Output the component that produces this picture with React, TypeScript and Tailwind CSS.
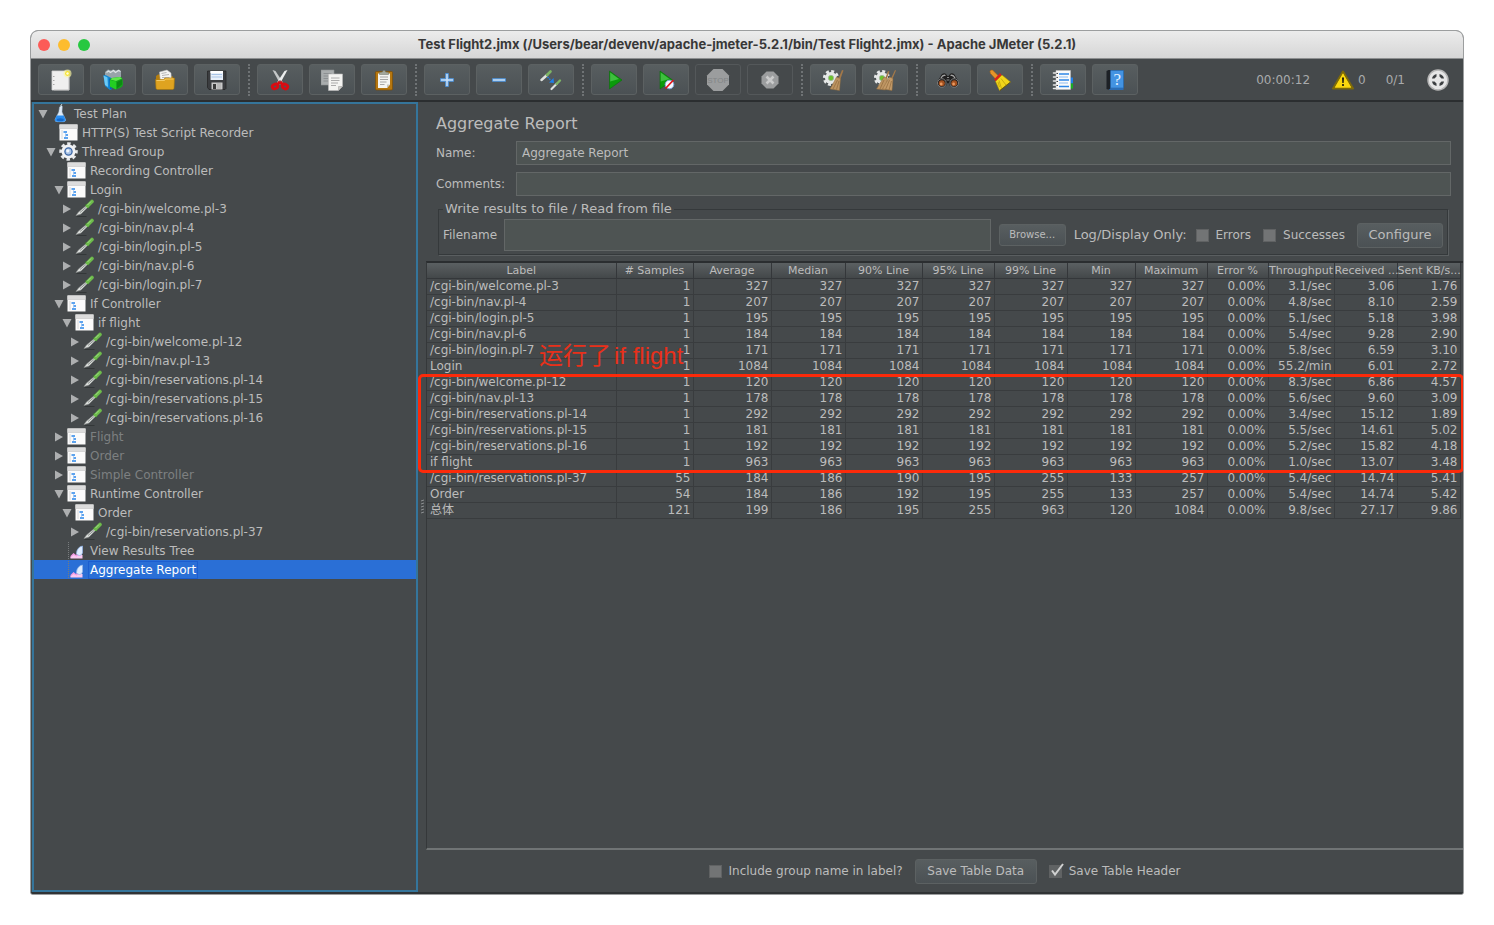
import { useState, type ReactNode } from "react";

/* ---------- toolbar icons ---------- */

function NewIcon() {
  return (
    <svg viewBox="0 0 22 22" className="size-[22px]">
      <path d="M2 2h17v19H2z" fill="#efefef" stroke="#d6d6d6" strokeWidth=".8" />
      <path d="M3 7.500h1.500M3 11.500h1.500M3 15.500h1.500" stroke="#a9a9a9" />
      <path d="M4 21h15V7" fill="none" stroke="#b9b9b9" strokeWidth=".7" />
      <circle cx="17.500" cy="4.500" r="4" fill="#fbf6a0" opacity=".65" />
      <circle cx="17.500" cy="4.500" r="2.400" fill="#f4e02b" />
      <circle cx="17.500" cy="4.500" r="1.200" fill="#fffde0" />
    </svg>
  );
}

function TemplatesIcon() {
  return (
    <svg viewBox="0 0 22 22" className="size-[22px]">
      <path d="M3 3l3-2.500 3 1 2-1 3 1 3-1 2 2v6l-8 3-8-3z" fill="#98a3a9" />
      <path d="M4.500 3.500l2-1.500 2 1.500 3-2 2 2 3-2 2 1" stroke="#dde2e4" strokeWidth="1.200" fill="none" />
      <path d="M1.500 6.500l2-.5 6 3v11.500l-1.500.5-5-4z" fill="#1389d6" />
      <path d="M1.500 6.500l4 2 .5 9.500-3-2z" fill="#6ccaf7" />
      <path d="M7 9.500h5v9l-4 2z" fill="#0b66b0" />
      <path d="M8 11q0-2 2-2l8-1q2 0 2.500 2l.5 5q0 2-2 3.500L14 20.500l-6-3z" fill="#14a81a" />
      <path d="M8.500 10.500l5.500 1.500 6-2.500-2-1.500-8 1z" fill="#5fe84a" />
      <path d="M8 11l6 1.500v8l-6-3z" fill="#23cf22" />
      <path d="M15 13l5-2.500v5l-5 4z" fill="#0c8a12" />
    </svg>
  );
}

function OpenIcon() {
  return (
    <svg viewBox="0 0 22 22" className="size-[22px]">
      <path d="M2 7l2-1.500h4l1 2h10V13H2z" fill="#b47e10" />
      <path d="M5.500 3l7.500-2 4 3 .5 9h-11z" fill="#f4f4f4" stroke="#bdbdbd" strokeWidth=".5" />
      <path d="M7.500 4.500l5-1M8 6.500l7-1M8 8.500h7.500" stroke="#999" strokeWidth=".7" />
      <path d="M1.500 10.500h8l1.500-1.500h9.500l-.5 10.500-1 1H3l-1-1z" fill="#dfa320" stroke="#a97708" strokeWidth=".6" />
      <path d="M2.500 11.500h8l1-1.500h8" stroke="#f6d478" strokeWidth=".8" fill="none" />
    </svg>
  );
}

function SaveIcon() {
  return (
    <svg viewBox="0 0 22 22" className="size-[22px]">
      <path d="M1.500 2h18.500v17.500l-1 1H3l-1.500-2z" fill="#3b3d40" stroke="#222" strokeWidth=".7" />
      <path d="M4.500 2h12.500v9H4.500z" fill="#e8f0fa" />
      <path d="M4.500 2h12.500v2H4.500z" fill="#fff" />
      <path d="M5.500 5.500h10.500M5.500 8h10.500" stroke="#a7c3e6" strokeWidth="1.200" />
      <path d="M5.500 13.500h11v7h-11z" fill="#c9c9c9" />
      <path d="M7 15h3v5H7z" fill="#3a3a3a" />
      <path d="M12 14v6.500M14 14v6.500" stroke="#9a9a9a" strokeWidth=".7" />
    </svg>
  );
}

function CutIcon() {
  return (
    <svg viewBox="0 0 22 22" className="size-[22px]">
      <path d="M3.500 1l3 1 7.500 11.500-2.500 2z" fill="#c4c7c8" />
      <path d="M18.500 1l-3 1L8 13.500l2.500 2z" fill="#eceeee" />
      <path d="M11 12.500l2.500 3M11 12.500l-2.500 3" stroke="#d80c12" strokeWidth="2.800" />
      <ellipse cx="6" cy="17.500" rx="2.800" ry="2.200" fill="none" stroke="#d80c12" strokeWidth="2.900" transform="rotate(-25 6 17.500)" />
      <ellipse cx="16" cy="17.500" rx="2.800" ry="2.200" fill="none" stroke="#d80c12" strokeWidth="2.900" transform="rotate(25 16 17.500)" />
      <circle cx="11" cy="12" r=".8" fill="#555" />
    </svg>
  );
}

function CopyIcon() {
  return (
    <svg viewBox="0 0 22 22" className="size-[22px]">
      <path d="M0 1h13v15H0z" fill="#a9adae" stroke="#8d9192" strokeWidth=".6" />
      <path d="M2.500 4.500h8M2.500 7h5M2.500 9.500h5M2.500 12h5" stroke="#85898a" strokeWidth=".8" />
      <path d="M7.500 5h14v12.500l-4 4H7.500z" fill="#f3f3f1" stroke="#bbb" strokeWidth=".6" />
      <path d="M10 9h8.500M10 11.500h8.500M10 14h7M10 16.500h5" stroke="#a3a3a3" strokeWidth=".9" />
      <path d="M17.500 21.500v-4h4z" fill="#c9c9c5" stroke="#999" strokeWidth=".5" />
    </svg>
  );
}

function PasteIcon() {
  return (
    <svg viewBox="0 0 22 22" className="size-[22px]">
      <rect x="2.500" y="2.500" width="17" height="18.500" rx="1" fill="#b5760f" stroke="#7d4f06" strokeWidth=".7" />
      <path d="M5 4.500h12v11l-3 3.500H5z" fill="#f4f4f2" />
      <path d="M7 8h8M7 10.500h8M7 13h6.500M7 15.500h4.500" stroke="#9d9d9d" strokeWidth=".9" />
      <path d="M14 19v-3.500h3z" fill="#c5c5c1" />
      <path d="M6.500 5.500V3.500l3-.5.5-1.500h2l.5 1.500 3 .5v2z" fill="#a3a79d" stroke="#6f7369" strokeWidth=".5" />
    </svg>
  );
}

function PlusIcon() {
  return (
    <svg viewBox="0 0 22 22" className="size-[22px]">
      <path d="M9.700 4.500h2.600v5.200h5.200v2.600h-5.200v5.200H9.700v-5.200H4.500V9.700h5.200z" fill="#c3dcf5" stroke="#4a8fd6" strokeWidth="1" />
    </svg>
  );
}

function MinusIcon() {
  return (
    <svg viewBox="0 0 22 22" className="size-[22px]">
      <path d="M4.500 9.700h13v2.600h-13z" fill="#c3dcf5" stroke="#4a8fd6" strokeWidth="1" />
    </svg>
  );
}

function ToggleIcon() {
  return (
    <svg viewBox="0 0 22 22" className="size-[22px]">
      <path d="M1.500 11L7 6" stroke="#dfe2df" strokeWidth="2.400" strokeLinecap="round" />
      <path d="M7 6l3.500-3.500" stroke="#7db565" strokeWidth="2.600" strokeLinecap="round" />
      <path d="M11.500 20l5-5" stroke="#dfe2df" strokeWidth="2.200" strokeLinecap="round" />
      <path d="M16.500 15l3.500-3.500" stroke="#7db565" strokeWidth="2.400" strokeLinecap="round" />
      <path d="M7.500 8l3.500 3.500" stroke="#1f7fe8" strokeWidth="1.500" strokeDasharray="1.500 1" />
      <path d="M9 13.500l5 .5-.5-5z" fill="#1f7fe8" />
    </svg>
  );
}

function StartIcon() {
  return (
    <svg viewBox="0 0 22 22" className="size-[22px]">
      <path d="M6.500 2L19 11 6.500 20z" fill="#0a9a0a" stroke="#0a6e0a" strokeWidth=".6" />
      <path d="M7.200 3.500L16 10l-8.800 2.500z" fill="#3fbf3f" />
    </svg>
  );
}

function StartNoPauseIcon() {
  return (
    <svg viewBox="0 0 22 22" className="size-[22px]">
      <path d="M5 2L17.500 11 5 20z" fill="#0a9a0a" stroke="#0a6e0a" strokeWidth=".6" />
      <path d="M5.700 3.500L14.500 10l-8.800 2.500z" fill="#3fbf3f" />
      <circle cx="14.500" cy="15.500" r="4.300" fill="#f5f8ff" stroke="#7fa6dc" strokeWidth="1" />
      <path d="M10.500 19.500l8-8.500" stroke="#e3131a" strokeWidth="1.700" />
    </svg>
  );
}

function StopIcon() {
  return (
    <svg viewBox="0 0 24 24" className="size-6">
      <path d="M7.500 1h9L23 7.500v9L16.500 23h-9L1 16.500v-9z" fill="#9b9d9e" />
      <text x="12" y="15" textAnchor="middle" className="font-['Liberation_Sans'] text-[8px]" fill="#828586">
        STOP
      </text>
    </svg>
  );
}

function ShutdownIcon() {
  return (
    <svg viewBox="0 0 22 22" className="size-[22px]">
      <path d="M7.500 2.500h7l5 5v7l-5 5h-7l-5-5v-7z" fill="#9b9d9e" />
      <path d="M7.500 7.500l7 7M14.500 7.500l-7 7" stroke="#c9caca" strokeWidth="2.600" />
    </svg>
  );
}

function Gear({ x, y }: { x: number; y: number }) {
  return (
    <g transform={`translate(${x} ${y})`}>
      <circle r="6" fill="#e6e8e8" />
      <circle r="6.600" fill="none" stroke="#e6e8e8" strokeWidth="3" strokeDasharray="2.900 2.280" />
      <circle r="2.700" fill="#6cc32f" />
      <circle r="2.700" fill="none" stroke="#a8adad" strokeWidth=".6" />
    </g>
  );
}

function ClearIcon() {
  return (
    <svg viewBox="0 0 22 22" className="size-[22px]">
      <Gear x={9} y={9} />
      <path d="M20 1l1.500.5-3.500 9.500-2-.5z" fill="#a37849" />
      <path d="M14.500 8l4 1.500-1 12L8 20q3-5 6.500-12z" fill="#bd9462" stroke="#8f6a3c" strokeWidth=".5" />
      <path d="M15.500 11l-4.500 9M17 12l-2.500 8.500" stroke="#8f6a3c" strokeWidth=".7" />
    </svg>
  );
}

function ClearAllIcon() {
  return (
    <svg viewBox="0 0 22 22" className="size-[22px]">
      <Gear x={8} y={9} />
      <path d="M14 2l1.500.5-3 8-1.500-.5zM21 1l1 .5-4 9.500-1.500-.5z" fill="#a37849" />
      <path d="M10 8l3.500 1.500-2 11.500L2.500 20z" fill="#bd9462" stroke="#8f6a3c" strokeWidth=".5" />
      <path d="M15.500 8l3.500 1.500-1 12-9.500-1.500z" fill="#c49b69" stroke="#8f6a3c" strokeWidth=".5" />
      <path d="M10 11l-4 9M15.500 11l-4 9.500M17.500 12l-2.500 9" stroke="#8f6a3c" strokeWidth=".7" />
    </svg>
  );
}

function SearchIcon() {
  return (
    <svg viewBox="0 0 24 22" className="h-[22px] w-6">
      <path d="M5.500 5.500Q8 3.500 10 5l1.500 2h1L14 5q2-1.500 4.500.5l4 7-2 5-6.500-.5-1.500-3h-1l-1.500 3-6.500.5-2-5z" fill="#202020" />
      <path d="M5 9q2-3.500 4.500-2.500M19 9q-2-3.500-4.500-2.500" stroke="#a5a5a5" strokeWidth="1.300" fill="none" />
      <path d="M11 8.500h2M10.500 11h3" stroke="#8a8a8a" strokeWidth="1" />
      <circle cx="5.800" cy="14" r="4.300" fill="#1c1c1c" stroke="#7d7d7d" strokeWidth="1" />
      <circle cx="18.200" cy="14" r="4.300" fill="#1c1c1c" stroke="#7d7d7d" strokeWidth="1" />
      <circle cx="5.800" cy="14.200" r="3" fill="#a4511f" />
      <circle cx="18.200" cy="14.200" r="3" fill="#a4511f" />
      <circle cx="5.200" cy="15" r="1.400" fill="#e99a62" />
      <circle cx="17.600" cy="15" r="1.400" fill="#e99a62" />
    </svg>
  );
}

function ResetSearchIcon() {
  return (
    <svg viewBox="0 0 22 22" className="size-[22px]">
      <path d="M1 2.500Q1 .5 3.500 1l6 6-3 3-5-5.500z" fill="#e5952a" stroke="#a8620b" strokeWidth=".5" />
      <path d="M5 10.500l6-6.500 2 2.500L7 12.500z" fill="#d8241c" />
      <path d="M6.500 12.500L13 6l8.500 7-11 8.500z" fill="#f1d51a" stroke="#a98f05" strokeWidth=".5" />
      <path d="M10 11.500l2.500 8M12 9.500l5 6.500M9 13l1.500 5" stroke="#b89b08" strokeWidth=".7" />
      <path d="M11 21.500L21.500 13" stroke="#5f5006" strokeWidth=".8" />
    </svg>
  );
}

function FunctionHelperIcon() {
  return (
    <svg viewBox="0 0 22 22" className="size-[22px]">
      <path d="M17 8.500h4v6h-4z" fill="#1f7fe8" />
      <path d="M17 14.500h4v5h-4z" fill="#19ad22" />
      <path d="M4 1.500h14.500v19H4z" fill="#fafafa" stroke="#c4c4c4" strokeWidth=".5" />
      <path d="M7 5h10M7 11h10M7 17.500h10" stroke="#2f86e6" strokeWidth="1.500" />
      <path d="M7 8h9M7 14h9" stroke="#8fbcf0" strokeWidth="1" />
      <path d="M1.500 4h4M1.500 8h4M1.500 12h4M1.500 16h4M1.500 19.500h4" stroke="#e7e7e7" strokeWidth="1.600" strokeLinecap="round" />
      <path d="M4.500 4.500h1.500M4.500 8.500h1.500M4.500 12.500h1.500M4.500 16.500h1.500" stroke="#444" strokeWidth="1" />
    </svg>
  );
}

function HelpIcon() {
  return (
    <svg viewBox="0 0 22 22" className="size-[22px]">
      <path d="M2.500 2l2-1H7v19.500H4l-1.500-.5z" fill="#1d2126" />
      <path d="M6.500 1.500h13v17.500h-13z" fill="#4393e2" stroke="#1f66b3" strokeWidth=".6" />
      <path d="M5 21l1.500-2h13v2z" fill="#2b6db5" />
      <text x="13.200" y="16" textAnchor="middle" className="font-['Liberation_Serif'] text-[17px]" fill="#e4f1ff">
        ?
      </text>
    </svg>
  );
}

function WarningIcon() {
  return (
    <svg viewBox="0 0 22 20" className="h-5 w-[22px]">
      <path d="M11 1.500L21 18.500H1z" fill="#f7cf05" stroke="#7d6a0a" strokeWidth="2" strokeLinejoin="round" />
      <path d="M11 3.500L19 17.500H3z" fill="#fbd80e" />
      <path d="M10 7.500h2l-.4 5.500h-1.200z" fill="#111" />
      <circle cx="11" cy="15" r="1.100" fill="#111" />
    </svg>
  );
}

function ExpandIcon() {
  return (
    <svg viewBox="0 0 22 22" className="size-[22px]">
      <circle cx="11" cy="11" r="10" fill="#e6e6e6" stroke="#b5b5b5" strokeWidth="1.500" />
      <path d="M5 9.500Q5.500 6 9.500 5v2.500L7.500 9.500zM17 9.500Q16.500 6 12.500 5v2.500l2 2zM5 12.500q.5 3.500 4.500 4.500v-2.500l-2-2zM17 12.500q-.5 3.500-4.500 4.500v-2.500l2-2z" fill="#3c3f41" />
    </svg>
  );
}

/* ---------- tree icons ---------- */

function FlaskIcon() {
  return (
    <svg viewBox="0 0 19 19" className="size-[19px]">
      <path d="M8.500 3l2-1.500.8 1-.3 5.500 3.500 7.500q.5 2-2 2.200H6Q3.500 17.500 4 15.500L7.800 8z" fill="#dfeaf6" stroke="#9fb9d0" strokeWidth=".5" />
      <path d="M5.600 11.500h7.200l1.700 4q.5 2-2 2.200H6q-2.500-.2-2-2.200z" fill="#2a8df0" />
      <ellipse cx="9.300" cy="15.800" rx="3.500" ry="1.500" fill="#1469cb" />
      <path d="M9.500 2L11 0" stroke="#bcc" />
    </svg>
  );
}

function ControllerIcon() {
  return (
    <svg viewBox="0 0 19 19" className="size-[19px]">
      <path d="M.5 1.500h18v16H.5z" fill="#fbfbfb" />
      <path d="M.5 1.500h18v4H.5z" fill="#dcdcdc" />
      <path d="M.5 5.500h18" stroke="#c6c6c6" strokeWidth=".6" />
      <path d="M3 7v9" stroke="#d8d8d8" strokeWidth="1" />
      <path d="M4.500 9h3.500M6 12h3M5 15h4" stroke="#2a86ea" strokeWidth="1.600" />
      <path d="M6.500 10v4" stroke="#a9cdf6" strokeWidth=".8" />
    </svg>
  );
}

function GearIcon() {
  return (
    <svg viewBox="0 0 19 19" className="size-[19px]">
      <circle cx="9.500" cy="9.500" r="7.500" fill="none" stroke="#e6e8ea" strokeWidth="3.500" strokeDasharray="3.300 2.590" strokeDashoffset="1.500" />
      <circle cx="9.500" cy="9.500" r="5.300" fill="none" stroke="#f1f2f4" strokeWidth="3.400" />
      <circle cx="9.500" cy="9.500" r="3.600" fill="#a9c3e6" stroke="#3f6aa8" strokeWidth="1.300" />
      <circle cx="8.800" cy="8.800" r="1.600" fill="#f2f7fd" />
    </svg>
  );
}

function SamplerIcon() {
  return (
    <svg viewBox="0 0 19 19" className="size-[19px]">
      <path d="M1.500 17.500h10" stroke="#2f3234" strokeWidth=".8" />
      <path d="M1 16.500L3.500 13l8-6.500L13 8l-7 7z" fill="#dde0de" stroke="#8d918f" strokeWidth=".6" />
      <path d="M5 13.500l6-5" stroke="#8c918e" strokeWidth="1" />
      <path d="M10.500 5.500l3.500 3.500" stroke="#3c7a2c" strokeWidth="1.500" />
      <path d="M12.500 7L17 2.500" stroke="#6dbb4b" strokeWidth="3.600" strokeLinecap="round" />
      <path d="M12.500 6L16 2.500" stroke="#a4de89" strokeWidth="1" />
    </svg>
  );
}

function ListenerIcon() {
  return (
    <svg viewBox="0 0 19 19" className="size-[19px]">
      <path d="M1.500 1v17" stroke="#777b7d" strokeDasharray="1 1" />
      <path d="M3.500 17v-2l3-3 2.500 2 3-4 3 1v6z" fill="#f29be3" />
      <path d="M3.500 17.500v-1l3-2.500 3 1.500 3-2 3 .5v3.500z" fill="#fbc9f1" />
      <path d="M9.500 12.500Q10 6 15.500 5v7q-1 2.500-3 2.500t-3-2z" fill="#dfecff" stroke="#8fb4ea" strokeWidth=".7" />
    </svg>
  );
}

/* ---------- data ---------- */

type Kind = "plan" | "controller" | "group" | "sampler" | "listener";

interface Node {
  level: number;
  kind: Kind;
  label: string;
  arrow?: "open" | "closed";
  disabled?: boolean;
  selected?: boolean;
}

const NODES: Node[] = [
  { level: 0, kind: "plan", label: "Test Plan", arrow: "open" },
  { level: 1, kind: "controller", label: "HTTP(S) Test Script Recorder" },
  { level: 1, kind: "group", label: "Thread Group", arrow: "open" },
  { level: 2, kind: "controller", label: "Recording Controller" },
  { level: 2, kind: "controller", label: "Login", arrow: "open" },
  { level: 3, kind: "sampler", label: "/cgi-bin/welcome.pl-3", arrow: "closed" },
  { level: 3, kind: "sampler", label: "/cgi-bin/nav.pl-4", arrow: "closed" },
  { level: 3, kind: "sampler", label: "/cgi-bin/login.pl-5", arrow: "closed" },
  { level: 3, kind: "sampler", label: "/cgi-bin/nav.pl-6", arrow: "closed" },
  { level: 3, kind: "sampler", label: "/cgi-bin/login.pl-7", arrow: "closed" },
  { level: 2, kind: "controller", label: "If Controller", arrow: "open" },
  { level: 3, kind: "controller", label: "if flight", arrow: "open" },
  { level: 4, kind: "sampler", label: "/cgi-bin/welcome.pl-12", arrow: "closed" },
  { level: 4, kind: "sampler", label: "/cgi-bin/nav.pl-13", arrow: "closed" },
  { level: 4, kind: "sampler", label: "/cgi-bin/reservations.pl-14", arrow: "closed" },
  { level: 4, kind: "sampler", label: "/cgi-bin/reservations.pl-15", arrow: "closed" },
  { level: 4, kind: "sampler", label: "/cgi-bin/reservations.pl-16", arrow: "closed" },
  { level: 2, kind: "controller", label: "Flight", arrow: "closed", disabled: true },
  { level: 2, kind: "controller", label: "Order", arrow: "closed", disabled: true },
  { level: 2, kind: "controller", label: "Simple Controller", arrow: "closed", disabled: true },
  { level: 2, kind: "controller", label: "Runtime Controller", arrow: "open" },
  { level: 3, kind: "controller", label: "Order", arrow: "open" },
  { level: 4, kind: "sampler", label: "/cgi-bin/reservations.pl-37", arrow: "closed" },
  { level: 2, kind: "listener", label: "View Results Tree" },
  { level: 2, kind: "listener", label: "Aggregate Report", selected: true },
];

const INDENT = ["pl-1", "pl-3", "pl-5", "pl-7", "pl-9"];

const KIND_ICON: Record<Kind, () => ReactNode> = {
  plan: FlaskIcon,
  controller: ControllerIcon,
  group: GearIcon,
  sampler: SamplerIcon,
  listener: ListenerIcon,
};

const COLUMNS: { name: string; width: string }[] = [
  { name: "Label", width: "w-[189px]" },
  { name: "# Samples", width: "w-[77px]" },
  { name: "Average", width: "w-[78px]" },
  { name: "Median", width: "w-[74px]" },
  { name: "90% Line", width: "w-[77px]" },
  { name: "95% Line", width: "w-[72px]" },
  { name: "99% Line", width: "w-[73px]" },
  { name: "Min", width: "w-[68px]" },
  { name: "Maximum", width: "w-[72px]" },
  { name: "Error %", width: "w-[61px]" },
  { name: "Throughput", width: "w-[66px]" },
  { name: "Received ...", width: "w-[63px]" },
  { name: "Sent KB/s...", width: "w-[63px]" },
];

const ROWS: string[][] = [
  ["/cgi-bin/welcome.pl-3", "1", "327", "327", "327", "327", "327", "327", "327", "0.00%", "3.1/sec", "3.06", "1.76"],
  ["/cgi-bin/nav.pl-4", "1", "207", "207", "207", "207", "207", "207", "207", "0.00%", "4.8/sec", "8.10", "2.59"],
  ["/cgi-bin/login.pl-5", "1", "195", "195", "195", "195", "195", "195", "195", "0.00%", "5.1/sec", "5.18", "3.98"],
  ["/cgi-bin/nav.pl-6", "1", "184", "184", "184", "184", "184", "184", "184", "0.00%", "5.4/sec", "9.28", "2.90"],
  ["/cgi-bin/login.pl-7", "1", "171", "171", "171", "171", "171", "171", "171", "0.00%", "5.8/sec", "6.59", "3.10"],
  ["Login", "1", "1084", "1084", "1084", "1084", "1084", "1084", "1084", "0.00%", "55.2/min", "6.01", "2.72"],
  ["/cgi-bin/welcome.pl-12", "1", "120", "120", "120", "120", "120", "120", "120", "0.00%", "8.3/sec", "6.86", "4.57"],
  ["/cgi-bin/nav.pl-13", "1", "178", "178", "178", "178", "178", "178", "178", "0.00%", "5.6/sec", "9.60", "3.09"],
  ["/cgi-bin/reservations.pl-14", "1", "292", "292", "292", "292", "292", "292", "292", "0.00%", "3.4/sec", "15.12", "1.89"],
  ["/cgi-bin/reservations.pl-15", "1", "181", "181", "181", "181", "181", "181", "181", "0.00%", "5.5/sec", "14.61", "5.02"],
  ["/cgi-bin/reservations.pl-16", "1", "192", "192", "192", "192", "192", "192", "192", "0.00%", "5.2/sec", "15.82", "4.18"],
  ["if flight", "1", "963", "963", "963", "963", "963", "963", "963", "0.00%", "1.0/sec", "13.07", "3.48"],
  ["/cgi-bin/reservations.pl-37", "55", "184", "186", "190", "195", "255", "133", "257", "0.00%", "5.4/sec", "14.74", "5.41"],
  ["Order", "54", "184", "186", "192", "195", "255", "133", "257", "0.00%", "5.4/sec", "14.74", "5.42"],
  ["总体", "121", "199", "186", "195", "255", "963", "120", "1084", "0.00%", "9.8/sec", "27.17", "9.86"],
];

const TOOLS: { label: string; icon: () => ReactNode; disabled?: boolean }[][] = [
  [
    { label: "New", icon: NewIcon },
    { label: "Templates", icon: TemplatesIcon },
    { label: "Open", icon: OpenIcon },
    { label: "Save", icon: SaveIcon },
  ],
  [
    { label: "Cut", icon: CutIcon },
    { label: "Copy", icon: CopyIcon },
    { label: "Paste", icon: PasteIcon },
  ],
  [
    { label: "Expand All", icon: PlusIcon },
    { label: "Collapse All", icon: MinusIcon },
    { label: "Toggle", icon: ToggleIcon },
  ],
  [
    { label: "Start", icon: StartIcon },
    { label: "Start no pauses", icon: StartNoPauseIcon },
    { label: "Stop", icon: StopIcon, disabled: true },
    { label: "Shutdown", icon: ShutdownIcon, disabled: true },
  ],
  [
    { label: "Clear", icon: ClearIcon },
    { label: "Clear All", icon: ClearAllIcon },
  ],
  [
    { label: "Search", icon: SearchIcon },
    { label: "Reset Search", icon: ResetSearchIcon },
  ],
  [
    { label: "Function Helper", icon: FunctionHelperIcon },
    { label: "Help", icon: HelpIcon },
  ],
];

/* ---------- pieces ---------- */

const RAISED = "rounded-[3px] border border-[#5c6162] bg-gradient-to-b from-[#585e60] to-[#4b5154]";
const FIELD = "min-w-0 flex-1 border border-[#636767] bg-[#4e5453] px-[5px] text-[#bcbcbc] outline-none";

function Toolbar() {
  return (
    <div className="flex h-[43px] items-center gap-1.5 border-b-2 border-[#2b2e30] px-[7px]">
      {TOOLS.map((group, i) => (
        <div key={group[0].label} className="flex items-center gap-1.5">
          {i > 0 && (
            <span className="flex h-8 w-[5px] justify-center">
              <span className="border-l-2 border-dotted border-[#6f7375]" />
            </span>
          )}
          {group.map(({ label, icon: Icon, disabled }) => (
            <button
              key={label}
              type="button"
              aria-label={label}
              disabled={disabled}
              className={`flex h-[31px] w-[46px] items-center justify-center ${disabled ? "rounded-[3px] border border-[#54585a]" : RAISED}`}
            >
              <Icon />
            </button>
          ))}
        </div>
      ))}
      <div className="ml-auto flex items-center pr-[7px] text-[#a9abac]">
        <span>00:00:12</span>
        <span className="ml-[22px] flex items-center gap-1">
          <WarningIcon />0
        </span>
        <span className="ml-5">0/1</span>
        <span className="ml-[22px]">
          <ExpandIcon />
        </span>
      </div>
    </div>
  );
}

function Tree() {
  return (
    <nav aria-label="Test plan" className="w-[386px] shrink-0 border-2 border-[#35759b]">
      <ul>
        {NODES.map((node, i) => {
          const Icon = KIND_ICON[node.kind];
          return (
            <li
              key={i}
              className={`flex h-[19px] items-center whitespace-nowrap ${INDENT[node.level]} ${
                node.selected ? "bg-[#2a6fd6] text-white" : node.disabled ? "text-[#7d8081]" : "text-[#bcbcbc]"
              }`}
            >
              <span className="flex w-[13px] shrink-0 items-center">
                {node.arrow && (
                  <svg viewBox="0 0 10 10" className="size-2.5" fill="#adafb0">
                    {node.arrow === "open" ? <path d="M.5 1h9L5 9.500z" /> : <path d="M1 .5v9L9 5z" />}
                  </svg>
                )}
              </span>
              <Icon />
              <span className={`ml-0.5 border px-px leading-4 ${node.selected ? "border-[#1c5ed0]" : "border-transparent"}`}>
                {node.label}
              </span>
            </li>
          );
        })}
      </ul>
    </nav>
  );
}

function CheckBox({ label, on = false }: { label: string; on?: boolean }) {
  const [checked, setChecked] = useState(on);
  return (
    <label className="flex items-center gap-[7px] whitespace-nowrap">
      <span className="relative flex">
        <input
          type="checkbox"
          checked={checked}
          onChange={(e) => setChecked(e.target.checked)}
          className="size-[13px] appearance-none border border-[#606263] bg-[#727475]"
        />
        {checked && (
          <svg viewBox="0 0 15 15" className="pointer-events-none absolute -top-0.5 left-0 size-[15px]">
            <path d="M1 3h11v11H1z" fill="#606364" />
            <path d="M3 7.500l3 4L14 1" fill="none" stroke="#d0d1d1" strokeWidth="2" />
          </svg>
        )}
      </span>
      {label}
    </label>
  );
}

function ReportTable() {
  return (
    <div className="relative ml-2 flex-1 border-t-2 border-b-2 border-l border-t-[#2b2e30] border-b-[#707475] border-l-[#35383a] pr-1">
      <table className="w-full table-fixed border-collapse">
        <colgroup>
          {COLUMNS.map((c) => (
            <col key={c.name} className={c.width} />
          ))}
        </colgroup>
        <thead>
          <tr className="bg-gradient-to-b from-[#5b6062] to-[#424648]">
            {COLUMNS.map((c) => (
              <th
                key={c.name}
                className="border-r border-b border-[#34373a] p-0 text-center text-[11px] leading-[15px] font-normal whitespace-nowrap"
              >
                {c.name}
              </th>
            ))}
          </tr>
        </thead>
        <tbody>
          {ROWS.map((row) => (
            <tr key={row[0]}>
              {row.map((cell, i) => (
                <td
                  key={i}
                  className={`border-r border-b border-[#393c3e] py-0 leading-[15px] whitespace-nowrap ${
                    i === 0 ? "pl-[3px] text-left" : "pr-0.5 text-right"
                  }`}
                >
                  {cell}
                </td>
              ))}
            </tr>
          ))}
        </tbody>
      </table>
      <div className="pointer-events-none absolute top-[111px] -right-px -left-[9px] h-[99px] rounded-[5px] border-[3px] border-[#fc2a0a]" />
      <p className="pointer-events-none absolute top-[77px] left-28 flex gap-[3px] font-['Liberation_Sans','Noto_Sans_CJK_SC',sans-serif] text-2xl leading-8 whitespace-nowrap text-[#e8301a]">
        <span>运行了</span>
        <span>if flight</span>
      </p>
    </div>
  );
}

export default function App() {
  const [name, setName] = useState("Aggregate Report");
  const [comments, setComments] = useState("");
  const [file, setFile] = useState("");

  return (
    <div className="flex min-h-screen flex-col bg-white p-[30px] font-['DejaVu_Sans','Noto_Sans_CJK_SC',sans-serif] text-xs text-[#bcbcbc]">
      <div className="flex flex-1 flex-col overflow-hidden rounded-t-lg rounded-b-[3px] border border-[#9c9e9f] bg-[#45494b]">
        <header className="grid h-7 grid-cols-[1fr_auto_1fr] items-center border-b border-[#8d8f90] bg-gradient-to-b from-[#ececec] to-[#d6d6d6] px-[7px]">
          <div className="flex gap-2">
            <span className="size-3 rounded-full bg-[#fc5b57]" />
            <span className="size-3 rounded-full bg-[#fdbc2e]" />
            <span className="size-3 rounded-full bg-[#27c840]" />
          </div>
          <h1 className="font-['Inter',sans-serif] text-[13px] font-bold whitespace-nowrap text-[#383838]">
            Test Flight2.jmx (/Users/bear/devenv/apache-jmeter-5.2.1/bin/Test Flight2.jmx) - Apache JMeter (5.2.1)
          </h1>
        </header>

        <Toolbar />

        <div className="flex flex-1 border-b-2 border-[#303335] pl-px">
          <Tree />
          <main className="relative flex min-w-0 flex-1 flex-col">
            <svg viewBox="0 0 6 16" className="absolute top-[397px] left-0.5 h-4 w-1.5">
              <path d="M1 2l3-1M1 5l3-1M1 8l3-1M1 11l3-1M1 14l3-1" stroke="#8b8e90" />
            </svg>
            <h2 className="mt-3 ml-[18px] text-base leading-5">Aggregate Report</h2>
            <div className="mt-[7px] mr-3 ml-[18px] grid gap-[7px]">
              <div className="flex h-6 items-center">
                <label htmlFor="name" className="w-20">Name:</label>
                <input id="name" value={name} onChange={(e) => setName(e.target.value)} className={`h-6 ${FIELD}`} />
              </div>
              <div className="flex h-6 items-center">
                <label htmlFor="comments" className="w-20">Comments:</label>
                <input id="comments" value={comments} onChange={(e) => setComments(e.target.value)} className={`h-6 ${FIELD}`} />
              </div>
            </div>
            <fieldset className="mt-[5px] mr-[15px] mb-1.5 ml-5 border border-[#35393b] px-1 pt-0.5 pb-px shadow-[1px_1px_0_#5a5e60]">
              <legend className="px-0.5 text-[13px] leading-4">Write results to file / Read from file</legend>
              <div className="mb-0.5 flex h-8 items-center">
                <label htmlFor="file" className="mr-[7px]">Filename</label>
                <input id="file" value={file} onChange={(e) => setFile(e.target.value)} className={`h-8 ${FIELD}`} />
                <button type="button" className={`ml-2 h-[22px] w-[67px] text-[10px] ${RAISED}`}>Browse...</button>
                <span className="mr-[9px] ml-2 text-[13px] whitespace-nowrap">Log/Display Only:</span>
                <div className="flex gap-3">
                  <CheckBox label="Errors" />
                  <CheckBox label="Successes" />
                </div>
                <button type="button" className={`ml-3 h-[25px] w-[86px] text-[13px] ${RAISED}`}>Configure</button>
              </div>
            </fieldset>
            <ReportTable />
            <footer className="flex h-[42px] items-center justify-center pl-2">
              <CheckBox label="Include group name in label?" />
              <button type="button" className={`mr-3 ml-3 h-[25px] w-[122px] ${RAISED}`}>Save Table Data</button>
              <CheckBox label="Save Table Header" on />
            </footer>
          </main>
        </div>
      </div>
    </div>
  );
}
